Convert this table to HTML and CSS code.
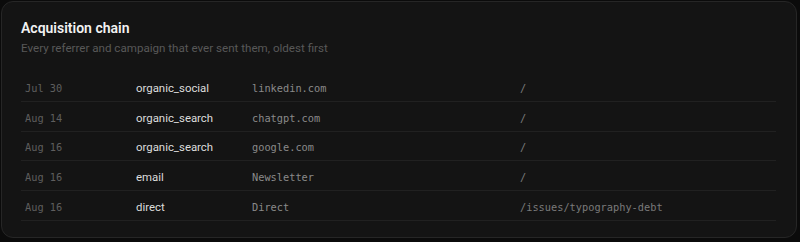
FILE: index.html
```html
<!DOCTYPE html>
<html lang="en">
<head>
  <meta charset="UTF-8">
  <meta name="viewport" content="width=device-width, initial-scale=1.0">
  <title>Acquisition chain</title>
  <link rel="stylesheet" href="styles.css">
</head>
<body>
  <div class="card">
    <h2 class="title">Acquisition chain</h2>
    <p class="subtitle">Every referrer and campaign that ever sent them, oldest first</p>

    <div class="chain">
      <div class="row">
        <span class="date">Jul 30</span>
        <span class="source">organic_social</span>
        <span class="referrer">linkedin.com</span>
        <span class="path">/</span>
      </div>
      <div class="row">
        <span class="date">Aug 14</span>
        <span class="source">organic_search</span>
        <span class="referrer">chatgpt.com</span>
        <span class="path">/</span>
      </div>
      <div class="row">
        <span class="date">Aug 16</span>
        <span class="source">organic_search</span>
        <span class="referrer">google.com</span>
        <span class="path">/</span>
      </div>
      <div class="row">
        <span class="date">Aug 16</span>
        <span class="source">email</span>
        <span class="referrer">Newsletter</span>
        <span class="path">/</span>
      </div>
      <div class="row">
        <span class="date">Aug 16</span>
        <span class="source">direct</span>
        <span class="referrer">Direct</span>
        <span class="path">/issues/typography-debt</span>
      </div>
    </div>
  </div>
</body>
</html>
```

FILE: styles.css
```css
body {
  margin: 0;
  padding: 1px 3px 4px 1px;
  background-color: #0b0b0b;
  font-family: Roboto, "Noto Sans", sans-serif;
  color: #ededed;
}

.card {
  height: 237px;
  box-sizing: border-box;
  background-color: #141414;
  border: 1px solid #262626;
  border-radius: 12px;
  padding: 16px 19px 0 19px;
}

.title {
  margin: 0;
  font-size: 14px;
  font-weight: 600;
  line-height: 20px;
  color: #f2f2f2;
}

.subtitle {
  margin: 1px 0 0;
  font-size: 11.6px;
  line-height: 18px;
  color: #585858;
}

.chain {
  margin-top: 15px;
  margin-right: 1px;
}

.row {
  display: grid;
  grid-template-columns: 111px 116px 268px 1fr;
  align-items: center;
  height: 28.75px;
  border-bottom: 1px solid #212121;
}

.row span {
  padding: 3px 0 0 4px;
  white-space: nowrap;
}

.date,
.referrer,
.path {
  font-family: "DejaVu Sans Mono", monospace;
  font-size: 10.3px;
}

.date {
  color: #5e5e5e;
}

.source {
  font-size: 11.4px;
  color: #dcdcdc;
}

.referrer {
  color: #8a8a8a;
}

.path {
  color: #7a7a7a;
}
```
